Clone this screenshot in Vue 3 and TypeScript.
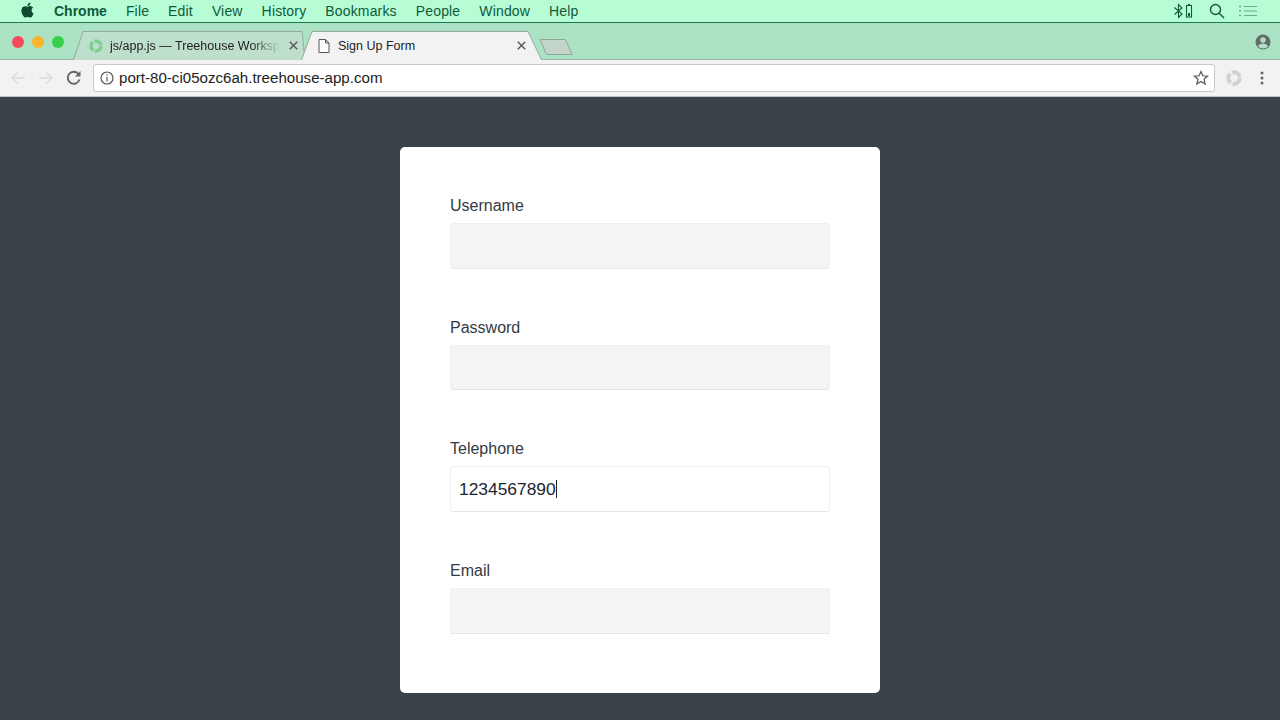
<template>
  <div class="screen">
    <div class="menubar">
      <svg class="apple" viewBox="0 0 24 24"><path d="M12.152 6.896c-.948 0-2.415-1.078-3.96-1.04-2.04.027-3.91 1.183-4.961 3.014-2.117 3.675-.546 9.103 1.519 12.09 1.013 1.454 2.208 3.09 3.792 3.039 1.52-.065 2.09-.987 3.935-.987 1.831 0 2.35.987 3.96.948 1.637-.026 2.676-1.48 3.676-2.948 1.156-1.688 1.636-3.325 1.662-3.415-.039-.013-3.182-1.221-3.22-4.857-.026-3.04 2.48-4.494 2.597-4.559-1.429-2.09-3.623-2.324-4.39-2.376-2-.156-3.675 1.09-4.61 1.09zM15.53 3.83c.843-1.012 1.4-2.427 1.245-3.83-1.207.052-2.662.805-3.532 1.818-.78.896-1.454 2.338-1.273 3.714 1.338.104 2.715-.688 3.559-1.701"/></svg>
      <span class="app-name">Chrome</span>
      <span v-for="m in menus" :key="m" class="menu-item">{{ m }}</span>
      <div class="status">
        <svg width="22" height="16" viewBox="0 0 22 16" fill="none" stroke="#0f5a3a" stroke-width="1.1">
          <path d="M1.5 4.5 9 11l-3.5 3.5V1.500L9 5 1.500 11.500"/>
          <rect x="13.500" y="2.500" width="5" height="11.500"/>
          <rect x="15" y="10" width="2" height="3" fill="#0f5a3a" stroke="none"/>
          <rect x="15" y="1" width="2" height="1.500" fill="#0f5a3a" stroke="none"/>
        </svg>
        <svg width="16" height="16" viewBox="0 0 16 16" fill="none" stroke="#0f5a3a" stroke-width="1.400">
          <circle cx="6.500" cy="6.500" r="5"/>
          <path d="M10.200 10.200 15 15"/>
        </svg>
        <svg width="18" height="12" viewBox="0 0 18 12" fill="none" stroke="#6fa98c" stroke-width="1">
          <path d="M5 1.500h13M5 6h13M5 10.500h13"/>
          <path d="M0 1.500h2M0 6h2M0 10.500h2" stroke-width="1.400"/>
        </svg>
      </div>
    </div>

    <div class="tabstrip">
      <div class="lights">
        <i class="light red"></i>
        <i class="light yellow"></i>
        <i class="light green"></i>
      </div>
      <div class="tab inactive">
        <svg class="tab-bg" width="232" height="29" viewBox="0 0 232 29">
          <path d="M.5 29 10 .5h219L232 29" fill="#bddfcc" stroke="#93ab9e"/>
        </svg>
        <svg class="favicon" width="14" height="14" viewBox="0 0 14 14" fill="none" stroke="#7ed08e" stroke-width="3.500">
          <circle cx="7" cy="7" r="5" stroke-dasharray="9 1.500"/>
        </svg>
        <span class="tab-title fade">js/app.js — Treehouse Worksp</span>
        <svg class="tab-close" width="9" height="9" viewBox="0 0 9 9" stroke="#5a5a5a" stroke-width="1.500">
          <path d="M.8.8l7.400 7.400M8.200.8.800 8.200"/>
        </svg>
      </div>
      <div class="tab active">
        <svg class="tab-bg" width="241" height="29" viewBox="0 0 241 29">
          <path d="M.5 29 11 .5h216L240.500 29" fill="#f2f2f2" stroke="#9aa89f"/>
        </svg>
        <svg class="favicon" width="12" height="14" viewBox="0 0 12 14" fill="#fff" stroke="#555" stroke-width="1">
          <path d="M1 .5h6.500L11 4v9.500H1zM7.500.5V4H11"/>
        </svg>
        <span class="tab-title">Sign Up Form</span>
        <svg class="tab-close" width="9" height="9" viewBox="0 0 9 9" stroke="#5a5a5a" stroke-width="1.500">
          <path d="M.8.8l7.400 7.400M8.200.8.800 8.200"/>
        </svg>
      </div>
      <svg class="new-tab" width="34" height="16" viewBox="0 0 34 16">
        <path d="M1 .5h24a2 2 0 0 1 2 1L33 15.500H9a2 2 0 0 1-2-1z" fill="#c3d4ca" stroke="#8fa598"/>
      </svg>
      <svg class="profile" width="16" height="16" viewBox="0 0 16 16">
        <circle cx="8" cy="8" r="7.500" fill="#5f6d66"/>
        <circle cx="8" cy="6" r="2.700" fill="#b5dcc6"/>
        <path d="M3 12.500c.8-2.300 3-3 5-3s4.200.7 5 3c-1.200 1.300-3 2-5 2s-3.800-.7-5-2z" fill="#b5dcc6"/>
      </svg>
    </div>

    <div class="toolbar">
      <svg class="nav" width="16" height="14" viewBox="0 0 16 14" fill="none" stroke="#dcdcdc" stroke-width="1.600">
        <path d="M15 7H2M7.500 1.500 2 7l5.500 5.500"/>
      </svg>
      <svg class="nav" width="16" height="14" viewBox="0 0 16 14" fill="none" stroke="#dcdcdc" stroke-width="1.600">
        <path d="M1 7h13M8.500 1.500 14 7l-5.500 5.500"/>
      </svg>
      <svg class="nav reload" width="16" height="16" viewBox="0 0 16 16" fill="none" stroke="#666" stroke-width="1.900">
        <path d="M13.500 9.500A6 6 0 1 1 12.300 3.800"/>
        <path d="M14.500 1v5.500H9z" fill="#666" stroke="none"/>
      </svg>
      <div class="omnibox">
        <svg width="14" height="14" viewBox="0 0 14 14" fill="none" stroke="#555" stroke-width="1.200">
          <circle cx="7" cy="7" r="6"/>
          <path d="M7 6v4.500M7 3.200v1.400"/>
        </svg>
        <span class="url">port-80-ci05ozc6ah.treehouse-app.com</span>
        <svg class="star" width="16" height="16" viewBox="0 0 16 16" fill="none" stroke="#555" stroke-width="1.200">
          <path d="m8 1.500 1.900 4.300 4.600.4-3.500 3.100 1.100 4.600L8 11.500l-4.100 2.400L5 9.300 1.500 6.200l4.600-.4z"/>
        </svg>
      </div>
      <svg class="ext" width="16" height="16" viewBox="0 0 14 14" fill="none" stroke="#cfd2d0" stroke-width="3.500">
        <circle cx="7" cy="7" r="5" stroke-dasharray="9 1.500"/>
      </svg>
      <svg class="dots" width="4" height="14" viewBox="0 0 4 14" fill="#666">
        <circle cx="2" cy="2" r="1.500"/>
        <circle cx="2" cy="7" r="1.500"/>
        <circle cx="2" cy="12" r="1.500"/>
      </svg>
    </div>

    <main class="page">
      <form class="card" @submit.prevent>
        <div v-for="f in fields" :key="f.label" class="field">
          <label class="label">{{ f.label }}</label>
          <div class="input-wrap">
            <input class="input" :class="{ focused: f.focused }" type="text" :value="f.value" readonly />
            <span v-if="f.focused" class="caret"></span>
          </div>
        </div>
      </form>
    </main>
  </div>
</template>

<script setup lang="ts">
const menus = ["File", "Edit", "View", "History", "Bookmarks", "People", "Window", "Help"]

const fields = [
  { label: "Username", value: "", focused: false },
  { label: "Password", value: "", focused: false },
  { label: "Telephone", value: "1234567890", focused: true },
  { label: "Email", value: "", focused: false },
]
</script>

<style>
html,
body {
  margin: 0;
  background: #3b4249;
}
</style>

<style scoped>
.screen {
  width: 1280px;
  height: 720px;
  overflow: hidden;
  display: flex;
  flex-direction: column;
  font-family: "Liberation Sans", Arial, sans-serif;
}

.menubar {
  height: 22px;
  flex: none;
  display: flex;
  align-items: center;
  gap: 19px;
  padding: 0 23px 0 20px;
  background: #b6fdd6;
  border-bottom: 1px solid #1d7a52;
  color: #0f5a3a;
  font-size: 14px;
}

.apple {
  width: 15px;
  height: 16px;
  fill: #0f4a30;
  margin-top: -2px;
}

.app-name {
  font-weight: 700;
}

.menu-item {
  letter-spacing: 0.16px;
}

.status {
  margin-left: auto;
  display: flex;
  align-items: center;
  gap: 14px;
}

.tabstrip {
  height: 37px;
  flex: none;
  display: flex;
  align-items: flex-end;
  background: #abe2c3;
  border-bottom: 1px solid #a0b3a8;
  box-sizing: border-box;
}

.lights {
  width: 73px;
  flex: none;
  align-self: center;
  display: flex;
  gap: 8px;
  padding-left: 12px;
  box-sizing: border-box;
  margin-top: 2px;
}

.light {
  width: 12px;
  height: 12px;
  border-radius: 50%;
}

.red { background: #f8485a; }
.yellow { background: #fbb52c; }
.green { background: #36d04a; }

.tab {
  position: relative;
  height: 29px;
  flex: none;
  display: flex;
  align-items: center;
  font-size: 12.5px;
  color: #222;
  margin-bottom: -1px;
}

.tab-bg {
  position: absolute;
  left: 0;
  top: 0;
}

.tab.inactive {
  width: 232px;
  padding-left: 16px;
  box-sizing: border-box;
}

.tab.active {
  width: 241px;
  margin-left: -4px;
  padding-left: 17px;
  box-sizing: border-box;
}

.favicon,
.tab-title,
.tab-close {
  position: relative;
}

.tab-title {
  white-space: nowrap;
  overflow: hidden;
}

.inactive .tab-title {
  margin-left: 7px;
  width: 171px;
}

.active .tab-title {
  margin-left: 8px;
  width: 170.5px;
}

.fade {
  -webkit-mask-image: linear-gradient(to right, #000 82%, transparent);
  mask-image: linear-gradient(to right, #000 82%, transparent);
}

.tab-close {
  flex: none;
  margin-left: 8px;
}

.new-tab {
  flex: none;
  margin: 0 0 4px -3px;
}

.profile {
  margin: 0 9px 9px auto;
  flex: none;
}

.toolbar {
  height: 37px;
  flex: none;
  box-sizing: border-box;
  display: flex;
  align-items: center;
  background: #f2f2f2;
  border-bottom: 1px solid #c4c4c4;
  padding: 0 16px 0 10px;
}

.nav {
  flex: none;
  margin-right: 12px;
}

.nav.reload {
  margin-right: 11px;
}

.omnibox {
  flex: 1;
  height: 26px;
  display: flex;
  align-items: center;
  gap: 5px;
  padding: 0 5px 0 6px;
  background: #fff;
  border: 1px solid #c9c9c9;
  border-radius: 3px;
}

.url {
  font-size: 15.1px;
  color: #222;
  margin-top: -2px;
}

.star {
  margin-left: auto;
}

.ext {
  flex: none;
  margin: 0 0 0 11px;
}

.dots {
  flex: none;
  margin-left: 18px;
}

.page {
  flex: 1;
  min-height: 0;
  background: #3b4249;
  padding-top: 50px;
}

.card {
  width: 480px;
  height: 546px;
  margin: 0 auto;
  padding: 50px 50px 0;
  box-sizing: border-box;
  background: #fff;
  border-radius: 5px;
}

.field {
  margin-bottom: 50px;
}

.label {
  display: block;
  height: 18px;
  line-height: 18px;
  margin-bottom: 8px;
  font-size: 16px;
  color: #333a42;
}

.input-wrap {
  position: relative;
}

.input {
  display: block;
  width: 100%;
  height: 45.67px;
  box-sizing: border-box;
  padding: 0 8px;
  background: #f4f4f4;
  border: 1px solid #efefef;
  border-bottom-color: #e6e6e6;
  border-radius: 3px;
  font-family: "Liberation Sans", Arial, sans-serif;
  font-size: 17.4px;
  color: #1c2630;
  outline: none;
}

.input.focused {
  background: #fff;
}

.caret {
  position: absolute;
  left: 106px;
  top: 14px;
  width: 1px;
  height: 18px;
  background: #1c2630;
}
</style>
